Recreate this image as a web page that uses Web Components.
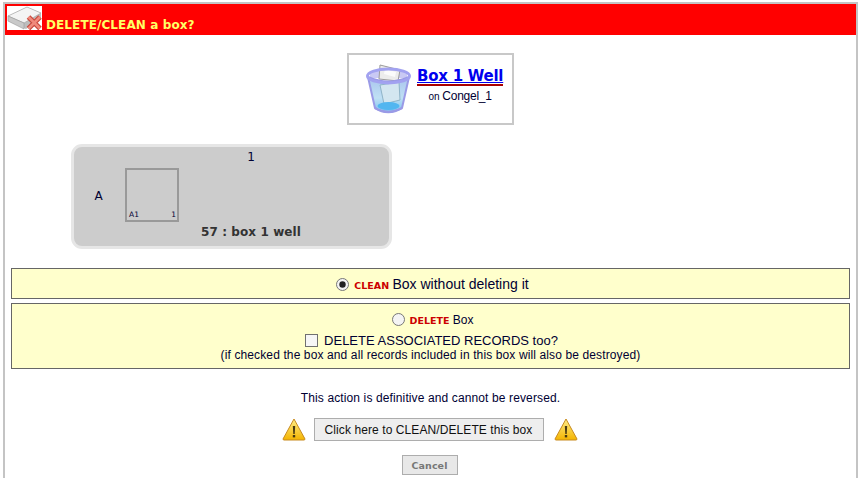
<!DOCTYPE html>
<html lang="en">
<head>
<meta charset="utf-8">
<title>DELETE/CLEAN a box?</title>
<style>
  html, body { margin: 0; height: 478px; overflow: hidden; background: #fff; }
  body { font-family: "Liberation Sans", Arial, sans-serif; color: #000033; }
</style>
</head>
<body>
<page-frame>
  <title-bar>DELETE/CLEAN a box?</title-bar>
  <box-heading name="Box 1 Well" place="Congel_1"></box-heading>
  <box-plate column="1" row="A" well="A1" count="1" caption="57 : box 1 well"></box-plate>
  <option-panel>
    <div style="height:29px;padding:1px 0 0 4px;box-sizing:border-box;display:flex;align-items:center;justify-content:center;font-size:14px">
      <choice-radio checked></choice-radio><span style="margin-left:5px"><action-word>CLEAN</action-word> Box without deleting it</span>
    </div>
  </option-panel>
  <option-panel second>
    <div style="height:20px;margin-top:6px;padding-left:4px;display:flex;align-items:center;justify-content:center;font-size:12px">
      <choice-radio style="margin-top:-2px"></choice-radio><span style="margin-left:5px"><action-word>DELETE</action-word> Box</span>
    </div>
    <div style="height:18px;margin-top:1px;padding-left:2px;display:flex;align-items:center;justify-content:center;font-size:13px">
      <choice-check></choice-check><span style="margin-left:6px">DELETE ASSOCIATED RECORDS too?</span>
    </div>
    <div style="text-align:center;font-size:12px;letter-spacing:.12px;line-height:14px;margin-top:-1px">(if checked the box and all records included in this box will also be destroyed)</div>
  </option-panel>
  <confirm-actions></confirm-actions>
</page-frame>

<script>
// outer grey frame, bottom edge runs off the window
class PageFrame extends HTMLElement {
  constructor() {
    super();
    this.attachShadow({ mode: 'open' });
    this.shadowRoot.innerHTML = `
      <style>
        :host {
          display: block;
          margin: 2px 3px 0 3px;
          height: 480px;
          border: solid #c4c4c4;
          border-width: 2px 2px 0 2px;
          background: #fff;
        }
      </style>
      <slot></slot>
    `;
  }
}

class TitleBar extends HTMLElement {
  constructor() {
    super();
    this.attachShadow({ mode: 'open' });
    this.shadowRoot.innerHTML = `
      <style>
        :host {
          display: flex;
          align-items: flex-start;
          height: 31px;
          background: #ff0000;
          color: #ffff66;
          font: bold 12px "DejaVu Sans", Verdana, sans-serif;
          letter-spacing: .1px;
        }
        svg { display: block; margin: 2px 0 0 2px; flex: none; }
        span { margin: 14px 0 0 4px; line-height: 15px; }
      </style>
      <svg width="35" height="24" viewBox="0 0 35 24">
        <rect width="35" height="24" fill="#fff"/>
        <path d="M1 10 L20 1 L34 7 L34 13 L19 23 L1 15 Z" fill="#bdbdbd"/>
        <path d="M1 10 L20 1 L34 7 L17 17 Z" fill="#f4f4f4" stroke="#a8a8a8" stroke-width=".7"/>
        <path d="M1 10 L17 17 L17 23 L1 15 Z" fill="#c9c9c9" stroke="#9a9a9a" stroke-width=".6"/>
        <path d="M21.500 11 L33 22.500 M33 11 L21.500 22.500" stroke="#c9483c" stroke-width="5"/>
        <path d="M21.500 11 L33 22.500 M33 11 L21.500 22.500" stroke="#f08a7c" stroke-width="2.600"/>
      </svg>
      <span><slot></slot></span>
    `;
  }
}

class BoxHeading extends HTMLElement {
  constructor() {
    super();
    this.attachShadow({ mode: 'open' });
    this.shadowRoot.innerHTML = `
      <style>
        :host { display: block; width: 167px; height: 72px; margin: 18px auto 0 auto;
          box-sizing: border-box; border: 2px solid #c8c8c8; background: #fff; }
        .row { display: flex; align-items: flex-start; padding: 9px 0 0 17px; }
        svg { display: block; flex: none; }
        .text { margin: 4px 0 0 6px; text-align: center; }
        a { display: block; font: bold 15px/16px "DejaVu Sans", Verdana, sans-serif; letter-spacing: -.25px; color: #0000ee;
          text-decoration: underline; border-bottom: 2px solid #aa0000; white-space: nowrap; }
        .on { font: 12px/14px "Liberation Sans", Arial, sans-serif; letter-spacing: -.25px; margin-top: 3px; color: #000033; }
        small { font-size: 10px; }
      </style>
      <div class="row">
        <svg width="45" height="50" viewBox="0 0 45 50">
          <defs>
            <linearGradient id="glass" x1="0" y1="0" x2="0" y2="1"><stop offset="0" stop-color="#a9c4ee"/><stop offset=".6" stop-color="#bfe0f4"/><stop offset="1" stop-color="#7cc4f0"/></linearGradient>
          </defs>
          <path d="M4 10 C8 3 37 3 41 10 L41 14 L4 14 Z" fill="#c9c9f4"/>
          <path d="M13 15 L14 1 L34 6 L32 17 Z" fill="#ececec" stroke="#9b9b9b"/>
          <path d="M18 10 L19 5 L30 8 L29 13 Z" fill="#fbfbfb"/>
          <path d="M2 13 L9 44 Q22 52 36 44 L43 13 Q22 22 2 13 Z" fill="url(#glass)" stroke="#9a9ae6" stroke-width="2"/>
          <path d="M14 21 L33 18 L34 36 L18 40 Z" fill="#d3e6f0" stroke="#8fb4c8"/>
          <ellipse cx="22.500" cy="42" rx="11" ry="4" fill="#52b6f0"/>
          <path d="M9 44 Q22 52 36 44" fill="none" stroke="#9a9ae6" stroke-width="2.500"/>
          <ellipse cx="22.500" cy="12" rx="21" ry="7" fill="none" stroke="#a2a2f0" stroke-width="3"/>
        </svg>
        <div class="text">
          <a href="#">${this.getAttribute('name')}</a>
          <div class="on"><small>on</small> ${this.getAttribute('place')}</div>
        </div>
      </div>
    `;
  }
}

class BoxPlate extends HTMLElement {
  constructor() {
    super();
    this.attachShadow({ mode: 'open' });
    this.shadowRoot.innerHTML = `
      <style>
        :host { display: block; width: 321px; height: 105px; margin: 19px 0 0 66px; box-sizing: border-box;
          border: 3px solid #e6e6e6; border-radius: 11px; background: #cccccc;
          font-family: "DejaVu Sans", Verdana, sans-serif; color: #000033; }
        .col { text-align: center; font-size: 12px; line-height: 13px; padding-top: 4px; margin-left: 38px; width: 278px; }
        .mid { display: flex; align-items: center; margin-top: 4px; }
        .row { width: 51px; text-align: center; font-size: 12px; padding-top: 2px; margin-left: -1px; }
        .well { width: 54px; height: 54px; box-sizing: border-box; border: 2px solid #999; display: flex; margin-left: 1px;
          align-items: flex-end; justify-content: space-between; padding: 0 1px 0 2px; font-size: 7.500px; line-height: 10px; }
        .cap { text-align: center; font-size: 12px; letter-spacing: .1px; font-weight: bold; color: #333; line-height: 14px; margin: 3px 0 0 38px; width: 278px; }
      </style>
      <div class="col">${this.getAttribute('column')}</div>
      <div class="mid">
        <div class="row">${this.getAttribute('row')}</div>
        <div class="well"><span>${this.getAttribute('well')}</span><span>${this.getAttribute('count')}</span></div>
      </div>
      <div class="cap">${this.getAttribute('caption')}</div>
    `;
  }
}

class OptionPanel extends HTMLElement {
  constructor() {
    super();
    this.attachShadow({ mode: 'open' });
    this.shadowRoot.innerHTML = `
      <style>
        :host { display: block; margin: 19px 6px 0 6px; box-sizing: border-box; border: 1px solid #666; background: #ffffcc; overflow: hidden; }
        :host([second]) { margin-top: 4px; height: 66px; }
      </style>
      <slot></slot>
    `;
  }
}

class ActionWord extends HTMLElement {
  constructor() {
    super();
    this.attachShadow({ mode: 'open' });
    this.shadowRoot.innerHTML = `
      <style>:host { display: inline; color: #cc0000; font: bold 9.500px "DejaVu Sans", Verdana, sans-serif; }</style>
      <slot></slot>
    `;
  }
}

class ChoiceRadio extends HTMLElement {
  constructor() {
    super();
    this.attachShadow({ mode: 'open' });
    const dot = this.hasAttribute('checked') ? '<circle cx="6.500" cy="6.500" r="3.200" fill="#222"/>' : '';
    this.shadowRoot.innerHTML = `
      <style>:host { display: block; width: 13px; height: 13px; } svg { display: block; }</style>
      <svg width="13" height="13" viewBox="0 0 13 13">
        <circle cx="6.500" cy="6.500" r="6" fill="#f4f4f4" stroke="#777"/>${dot}
      </svg>
    `;
  }
}

class ChoiceCheck extends HTMLElement {
  constructor() {
    super();
    this.attachShadow({ mode: 'open' });
    this.shadowRoot.innerHTML = `
      <style>:host { display: block; width: 13px; height: 13px; box-sizing: border-box; border: 1px solid #707070; background: #f6f6f6; }</style>
    `;
  }
}

class WarnIcon extends HTMLElement {
  constructor() {
    super();
    this.attachShadow({ mode: 'open' });
    this.shadowRoot.innerHTML = `
      <style>:host { display: block; width: 24px; height: 23px; } svg { display: block; }</style>
      <svg width="24" height="23" viewBox="0 0 24 23">
        <defs><linearGradient id="g" x1="0" y1="0" x2="0" y2="1"><stop offset="0" stop-color="#ffee88"/><stop offset="1" stop-color="#f4b400"/></linearGradient></defs>
        <path d="M12 1 L23 21 Q23 22 22 22 L2 22 Q1 22 1 21 Z" fill="url(#g)" stroke="#c88a1e" stroke-linejoin="round"/>
        <path d="M10.800 8 H13.200 L12.700 16 H11.300 Z" fill="#4a3a10"/>
        <rect x="10.800" y="17" width="2.400" height="2.400" fill="#4a3a10"/>
      </svg>
    `;
  }
}

class ConfirmActions extends HTMLElement {
  constructor() {
    super();
    this.attachShadow({ mode: 'open' });
    this.shadowRoot.innerHTML = `
      <style>
        :host { display: block; text-align: center; font: 12px "Liberation Sans", Arial, sans-serif; color: #000033; }
        .note { margin-top: 22px; line-height: 15px; letter-spacing: .12px; }
        .row { display: flex; justify-content: center; align-items: center; margin-top: 12px; padding-right: 2px; }
        button { font: 12px "Liberation Sans", Arial, sans-serif; letter-spacing: .09px; color: #111; margin: 0 10px 0 8px; padding: 0; box-sizing: border-box;
          width: 230px; height: 23px; background: #eeeeee; border: 1px solid #adadad; border-radius: 0; }
        .cancel { display: block; margin: 14px auto 0 auto; position: relative; left: -1px; width: 56px; height: 20px; font: bold 9.500px "DejaVu Sans", Verdana, sans-serif; color: #777; background: #e8e8e8; border: 1px solid #adadad; }
      </style>
      <div class="note">This action is definitive and cannot be reversed.</div>
      <div class="row">
        <warn-icon></warn-icon>
        <button type="button">Click here to CLEAN/DELETE this box</button>
        <warn-icon></warn-icon>
      </div>
      <button type="button" class="cancel">Cancel</button>
    `;
  }
}

customElements.define('page-frame', PageFrame);
customElements.define('title-bar', TitleBar);
customElements.define('box-heading', BoxHeading);
customElements.define('box-plate', BoxPlate);
customElements.define('option-panel', OptionPanel);
customElements.define('action-word', ActionWord);
customElements.define('choice-radio', ChoiceRadio);
customElements.define('choice-check', ChoiceCheck);
customElements.define('warn-icon', WarnIcon);
customElements.define('confirm-actions', ConfirmActions);
</script>
</body>
</html>
